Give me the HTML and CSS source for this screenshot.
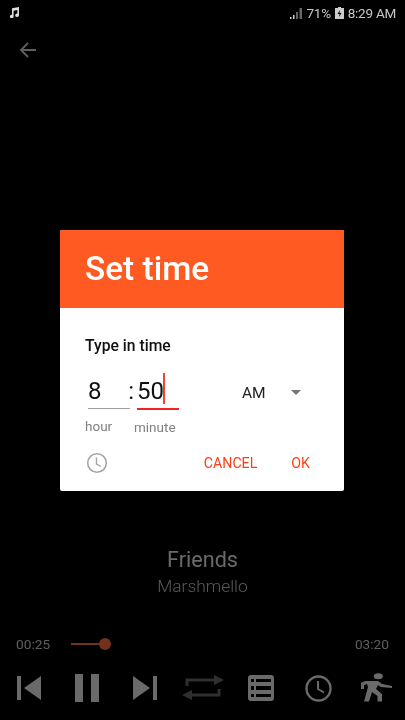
FILE: index.html
```html
<!DOCTYPE html>
<html lang="en">
<head>
    <meta charset="UTF-8">
    <meta name="viewport" content="width=device-width, initial-scale=1.0">
    <title>Set time</title>
    <link rel="stylesheet" href="styles.css">
</head>
<body>
    <div class="player">
        <div class="status-bar">
            <svg class="status-note" width="11" height="11" viewBox="0 0 11 11"><path d="M3 1.2 10 0v8.2a1.9 1.7 0 1 1-1.6-1.6V3L4.6 3.7v5.7A1.9 1.7 0 1 1 3 7.8z" fill="#ddd"/></svg>
            <div class="status-right">
                <svg width="12" height="12" viewBox="0 0 12 12"><path d="M0 10h1.5v2H0zM3 8h1.5v4H3z" fill="#ccc"/><path d="M6 5h2v7H6zM9.5 1H12v11H9.5z" fill="#666"/></svg>
                <span class="status-text">71%</span>
                <svg width="9" height="12" viewBox="0 0 9 12"><path d="M3 0h3v1h3v11H0V1h3zM5 3 2.5 7h2L4 10l2.500-4h-2z" fill="#ccc" fill-rule="evenodd"/></svg>
                <span class="status-text">8:29 AM</span>
            </div>
        </div>
        <div class="toolbar">
            <svg width="18" height="16" viewBox="0 0 18 16"><path d="M17 8H2M9 1 2 8l7 7" fill="none" stroke="#5f5f5f" stroke-width="1.8"/></svg>
        </div>
        <div class="track-info">
            <div class="track-title">Friends</div>
            <div class="track-artist">Marshmello</div>
        </div>
        <div class="progress">
            <span class="time">00:25</span>
            <div class="seekbar">
                <div class="seek-fill"></div>
                <div class="seek-thumb"></div>
            </div>
            <span class="time">03:20</span>
        </div>
        <div class="controls">
            <svg width="24" height="24" viewBox="0 0 24 24"><path d="M0 0h4v24H0zM24 0v24L7 12z" fill="#6a6a6a"/></svg>
            <svg width="24" height="28" viewBox="0 0 24 28"><path d="M0 0h8v28H0zM16 0h8v28h-8z" fill="#6a6a6a"/></svg>
            <svg width="24" height="24" viewBox="0 0 24 24"><path d="M0 0v24l17-12zM20 0h4v24h-4z" fill="#6a6a6a"/></svg>
            <svg width="42" height="26" viewBox="0 0 42 26"><path d="M5 11V5h29M37 14v6H8" fill="none" stroke="#2f2f2f" stroke-width="3"/><path d="M32 0l10 5-10 5zM10 15 0 20l10 5z" fill="#2f2f2f"/></svg>
            <svg width="26" height="26" viewBox="0 0 26 26"><path d="M3 0h20a3 3 0 0 1 3 3v20a3 3 0 0 1-3 3H3a3 3 0 0 1-3-3V3a3 3 0 0 1 3-3zM3 4v3h3V4zM8 4v3h15V4zM3 11v4h3v-4zM8 11v4h15v-4zM3 19v3h3v-3zM8 19v3h15v-3z" fill="#6a6a6a" fill-rule="evenodd"/></svg>
            <svg width="27" height="27" viewBox="0 0 27 27"><circle cx="13.500" cy="13.500" r="12" fill="none" stroke="#6a6a6a" stroke-width="2.400"/><path d="M13 6v8l6 3.500" fill="none" stroke="#6a6a6a" stroke-width="2"/></svg>
            <svg width="32" height="30" viewBox="0 0 32 30"><ellipse cx="18.300" cy="3.300" rx="4.500" ry="3" fill="#6a6a6a"/><path d="M5 8H18L22 11 32 13V15L21 14 18 12 16 16 22 21V28.500H17.500V23L12 19 9 28.500H4L8 14 7 11 4 12V16H1V10z" fill="#6a6a6a"/></svg>
        </div>
    </div>

    <div class="overlay">
        <div class="dialog">
            <div class="dialog-header">Set time</div>
            <div class="dialog-body">
                <div class="dialog-label">Type in time</div>
                <div class="time-row">
                    <div class="time-field">
                        <div class="time-value">8</div>
                        <div class="time-line"></div>
                        <div class="time-caption">hour</div>
                    </div>
                    <span class="time-colon">:</span>
                    <div class="time-field">
                        <div class="time-value">50<span class="cursor"></span></div>
                        <div class="time-line active"></div>
                        <div class="time-caption">minute</div>
                    </div>
                    <div class="ampm">
                        <span>AM</span>
                        <span class="arrow"></span>
                    </div>
                </div>
                <div class="dialog-actions">
                    <svg width="22" height="22" viewBox="0 0 22 22"><circle cx="11" cy="11" r="9.300" fill="none" stroke="#a6a6a6" stroke-width="1.600"/><path d="M10.500 5.500V12l4.500 2.500" fill="none" stroke="#a6a6a6" stroke-width="1.400"/></svg>
                    <a class="action cancel">CANCEL</a>
                    <a class="action">OK</a>
                </div>
            </div>
        </div>
    </div>
</body>
</html>
```

FILE: styles.css
```css
body {
    margin: 0;
    background-color: #000;
    font-family: Roboto, 'Liberation Sans', sans-serif;
}

.player {
    height: 720px;
    display: flex;
    flex-direction: column;
    overflow: hidden;
    will-change: transform;
}

/* Status bar */
.status-bar {
    height: 24px;
    padding: 1px 9px 0 9px;
    box-sizing: border-box;
    display: flex;
    justify-content: space-between;
    align-items: center;
}

.status-note {
    margin-bottom: 1px;
}

.status-right {
    display: flex;
    align-items: center;
    gap: 4px;
}

.status-text {
    font-size: 13.5px;
    letter-spacing: -0.25px;
    color: #c8c8c8;
}

.toolbar {
    height: 52px;
    padding-left: 19px;
    display: flex;
    align-items: center;
}

/* Track */
.track-info {
    margin-top: 470px;
    text-align: center;
}

.track-title {
    font-size: 21.6px;
    line-height: 28px;
    color: #6b6b6b;
}

.track-artist {
    font-size: 17.4px;
    font-weight: 300;
    line-height: 24px;
    color: #5a5a5a;
}

.progress {
    margin-top: 36px;
    padding: 0 16px;
    height: 20px;
    display: flex;
    align-items: center;
    justify-content: space-between;
    gap: 21px;
}

.time {
    font-size: 13.7px;
    color: #5f5f5f;
}

.seekbar {
    flex: 1;
    display: flex;
    align-items: center;
}

.seek-fill {
    width: 29px;
    height: 2px;
    background-color: #73301a;
}

.seek-thumb {
    width: 12px;
    height: 12px;
    margin-left: -1px;
    border-radius: 50%;
    background-color: #73301a;
}

.controls {
    margin-top: 19px;
    height: 30px;
    display: grid;
    grid-template-columns: repeat(7, 57.9px);
    justify-items: center;
    align-items: center;
}

/* Dialog */
.overlay {
    position: fixed;
    top: 0;
    left: 0;
    right: 1px;
    height: 100%;
    display: flex;
    align-items: center;
    justify-content: center;
    will-change: transform;
}

.dialog {
    width: 284px;
    height: 261px;
    background-color: #fff;
    border-radius: 2px;
    overflow: hidden;
}

.dialog-header {
    height: 78px;
    padding-left: 25px;
    background-color: #ff5a22;
    color: #fff;
    font-size: 33.4px;
    font-weight: 500;
    line-height: 78px;
}

.dialog-body {
    padding: 28px 24px 0 25px;
}

.dialog-label {
    font-size: 15.7px;
    font-weight: 500;
    line-height: 20px;
    color: #111;
}

.time-row {
    margin-top: 15px;
    display: flex;
    align-items: flex-start;
}

.time-field {
    width: 42px;
    margin-left: 3px;
}

.time-value {
    height: 37px;
    font-size: 24px;
    line-height: 40px;
    color: #111;
    display: flex;
}

.cursor {
    width: 2px;
    height: 31px;
    margin: 2px 0 0 -1px;
    background-color: #f44336;
}

.time-line {
    height: 1px;
    margin-bottom: 1px;
    background-color: #9e9e9e;
}

.time-line.active {
    height: 2px;
    margin-bottom: 0;
    background-color: #f4231f;
}

.time-caption {
    margin-top: 9px;
    margin-left: -3px;
    font-size: 13.5px;
    color: #808080;
    white-space: nowrap;
}

.time-colon {
    width: 6px;
    margin-left: -2px;
    text-align: right;
    font-size: 24px;
    line-height: 40px;
    color: #111;
}

.ampm {
    margin-left: 63px;
    width: 60px;
    height: 44px;
    display: flex;
    align-items: center;
    justify-content: space-between;
    font-size: 15.5px;
    color: #212121;
}

.arrow {
    width: 0;
    height: 0;
    margin-right: 1px;
    border-left: 5px solid transparent;
    border-right: 5px solid transparent;
    border-top: 5px solid #757575;
}

.dialog-actions {
    margin-top: 17px;
    padding-left: 1px;
    display: flex;
    align-items: center;
}

.action {
    font-size: 14.2px;
    font-weight: 400;
    color: #ff3d12;
    margin-right: 10px;
}

.cancel {
    margin-left: auto;
    margin-right: 34px;
}
```
